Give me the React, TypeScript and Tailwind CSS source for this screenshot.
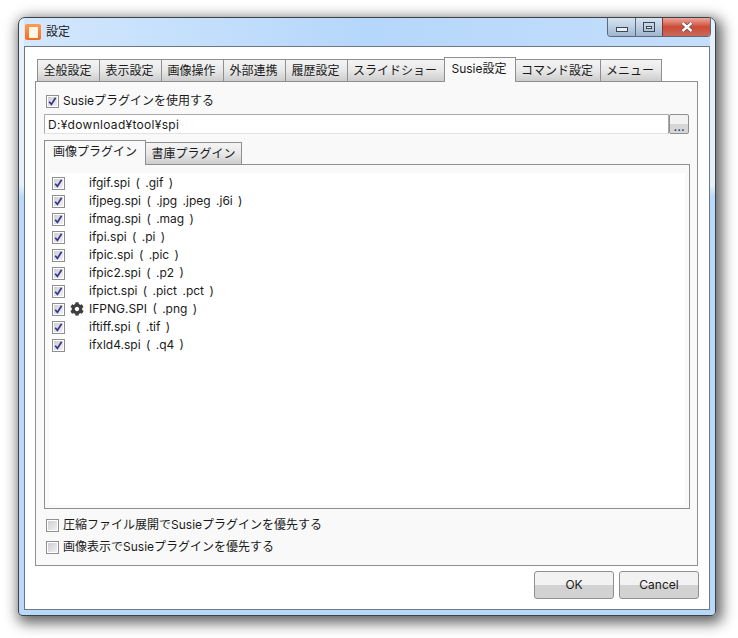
import { FaCog } from 'react-icons/fa';

const mainTabs = ['全般設定', '表示設定', '画像操作', '外部連携', '履歴設定', 'スライドショー', 'Susie設定', 'コマンド設定', 'メニュー'];
const tabWidths = ['w-[63px]', 'w-[63px]', 'w-[63px]', 'w-[63px]', 'w-[63px]', 'w-[98px]', 'w-[72px]', 'w-[86px]', 'w-[62px]'];

const plugins = [
  { name: 'ifgif.spi ( .gif )' },
  { name: 'ifjpeg.spi ( .jpg .jpeg .j6i )' },
  { name: 'ifmag.spi ( .mag )' },
  { name: 'ifpi.spi ( .pi )' },
  { name: 'ifpic.spi ( .pic )' },
  { name: 'ifpic2.spi ( .p2 )' },
  { name: 'ifpict.spi ( .pict .pct )' },
  { name: 'IFPNG.SPI ( .png )', gear: true },
  { name: 'iftiff.spi ( .tif )' },
  { name: 'ifxld4.spi ( .q4 )' },
];

function Check({ checked }: { checked?: boolean }) {
  return (
    <span className="flex w-[13px] h-[13px] shrink-0 items-center justify-center border border-[#8e8f8f] bg-white">
      <span className="relative block w-[9px] h-[9px] bg-gradient-to-br from-[#cfcfd2] to-[#f0f0f2]">
        {checked && (
          <svg viewBox="0 0 9 9" className="absolute inset-0 w-[9px] h-[9px]">
            <path d="M1.2 4.8 L3.4 7.4 L7.6 0.8" fill="none" stroke="#33338f" strokeWidth="1.7" />
          </svg>
        )}
      </span>
    </span>
  );
}

export default function App() {
  return (
    <div className="w-[738px] h-[638px] overflow-hidden bg-white pt-[17px] pl-[18px] text-[12px] leading-[18px] text-[#1a1a1a] font-['Inter','Noto_Sans_CJK_JP',sans-serif]">
      {/* Window frame */}
      <div className="w-[698px] h-[599px] flex flex-col rounded-t-[7px] rounded-b-[4px] border border-[#3f4347] bg-[linear-gradient(#e6f1fc_0,#e6f1fc_28%,#b8d9fa_30%)] px-[5px] pb-[5px] shadow-[3px_4px_14px_3px_rgba(0,0,0,0.62)]">
        {/* Title bar */}
        <div className="h-[28px] shrink-0 flex bg-gradient-to-r from-[#d3e7fc] via-[#b5d7fb] to-[#c4defb]">
          <span className="mt-[6px] ml-[1px] flex w-[16px] h-[16px] justify-center items-center rounded-[2px] bg-gradient-to-b from-[#ff9a52] to-[#f76a20]">
            <span className="block w-[9px] h-[11px] bg-[#fff6e6]" />
          </span>
          <span className="mt-[5px] ml-[5px] text-[12px] text-[#222]">設定</span>
          <div className="ml-auto -mr-[1px] flex h-[19px] border border-t-0 border-[#5b6a7b] rounded-b-[4px] overflow-hidden">
            <div className="w-[28px] flex items-center justify-center border-r border-[#5b6a7b] bg-gradient-to-b from-[#d6e4f1] via-[#bccee2] to-[#9fb5cf]">
              <span className="mt-[5px] block w-[12px] h-[5px] border border-[#3c4654] bg-[#e8eef5]" />
            </div>
            <div className="w-[27px] flex items-center justify-center border-r border-[#7a3b33] bg-gradient-to-b from-[#d6e4f1] via-[#bccee2] to-[#9fb5cf]">
              <span className="flex w-[12px] h-[10px] items-center justify-center border border-[#3c4654]">
                <span className="block w-[6px] h-[3px] border border-[#3c4654] bg-[#e8eef5]" />
              </span>
            </div>
            <div className="w-[47px] flex items-center justify-center bg-gradient-to-b from-[#eba79d] via-[#cc4a35] to-[#c9695b]">
              <svg viewBox="0 0 12 10" className="w-[12px] h-[10px]">
                <path d="M1.5 1 L10.5 9 M10.5 1 L1.5 9" stroke="#4a3a3a" strokeWidth="3.6" />
                <path d="M1.5 1 L10.5 9 M10.5 1 L1.5 9" stroke="#ffffff" strokeWidth="2.4" />
              </svg>
            </div>
          </div>
        </div>

        {/* Client area */}
        <div className="flex-1 border border-[#6f7780] bg-white pt-[10px] pl-[10px] flex flex-col">
          {/* Main tabs */}
          <div className="h-[24px] flex items-end pl-[2px] shrink-0 relative z-10">
            {mainTabs.map((t, i) =>
              t === 'Susie設定' ? (
                <div key={t} className={`${tabWidths[i]} h-[25px] -mb-[1px] -ml-[1px] pb-[3px] pr-[2px] border border-b-0 border-[#8f8f8f] bg-[#f9f9f9] flex items-center justify-center`}>
                  {t}
                </div>
              ) : (
                <div key={t} className={`${tabWidths[i]} h-[22px] pr-[2px] border border-b-0 border-[#8f8f8f] -ml-[1px] first:ml-0 bg-gradient-to-b from-[#f4f4f4] via-[#e8e8e8] to-[#cdcdcd] flex items-center justify-center`}>
                  {t}
                </div>
              ),
            )}
          </div>

          {/* Tab page */}
          <div className="w-[663px] h-[485px] border border-[#8f8f8f] bg-[#f9f9f9] px-[8px] flex flex-col">
            <label className="mt-[10px] h-[18px] ml-[2px] flex items-center gap-[4px]">
              <Check checked />
              Susieプラグインを使用する
            </label>
            <div className="mt-[4px] flex h-[20px]">
              <div className="w-[626px] border border-[#ababab] border-b-[#e3e3e3] bg-white pl-[3px] leading-[19px] tracking-[0.3px]">D:¥download¥tool¥spi</div>
              <button className="w-[20px] rounded-[2px] border border-[#8e8f8f] bg-gradient-to-b from-[#f2f2f2] from-50% to-[#d6d6d6] to-50% text-[13px] leading-[22px] text-[#1c3d6e]">...</button>
            </div>

            {/* Plugin tabs */}
            <div className="mt-[6px] h-[24px] flex items-end shrink-0 relative z-10">
              <div className="w-[102px] h-[25px] -mb-[1px] pb-[3px] border border-b-0 border-[#8f8f8f] bg-[#f9f9f9] flex items-center justify-center">画像プラグイン</div>
              <div className="w-[97px] h-[22px] -ml-[1px] border border-b-0 border-[#8f8f8f] bg-gradient-to-b from-[#f4f4f4] via-[#e8e8e8] to-[#cdcdcd] flex items-center justify-center">書庫プラグイン</div>
            </div>

            {/* Plugin list */}
            <div className="w-[646px] h-[345px] shrink-0 border border-[#8f8f8f] pt-[8px] px-[4px] pb-[3px]">
              <div className="h-full bg-white pl-[3px] pt-[1px]">
                {plugins.map((p) => (
                  <div key={p.name} className="h-[18px] flex items-center">
                    <Check checked />
                    <span className="w-[18px] ml-[3px] flex items-center justify-center">
                      {p.gear && <FaCog className="w-[14px] h-[14px] text-[#3f3f3f]" />}
                    </span>
                    <span className="ml-[3px] whitespace-pre [word-spacing:2px]">{p.name}</span>
                  </div>
                ))}
              </div>
            </div>

            <label className="mt-[7px] h-[18px] ml-[2px] flex items-center gap-[4px]">
              <Check />
              圧縮ファイル展開でSusieプラグインを優先する
            </label>
            <label className="mt-[4px] h-[18px] ml-[2px] flex items-center gap-[4px]">
              <Check />
              画像表示でSusieプラグインを優先する
            </label>
          </div>

          {/* Dialog buttons */}
          <div className="mt-[5px] w-[664px] flex justify-end gap-[5px]">
            <button className="w-[80px] h-[28px] rounded-[3px] border border-[#8e8f8f] bg-gradient-to-b from-[#f2f2f2] from-50% to-[#d2d2d2] to-50%">OK</button>
            <button className="w-[80px] h-[28px] rounded-[3px] border border-[#8e8f8f] bg-gradient-to-b from-[#f2f2f2] from-50% to-[#d2d2d2] to-50%">Cancel</button>
          </div>
        </div>
      </div>
    </div>
  );
}
